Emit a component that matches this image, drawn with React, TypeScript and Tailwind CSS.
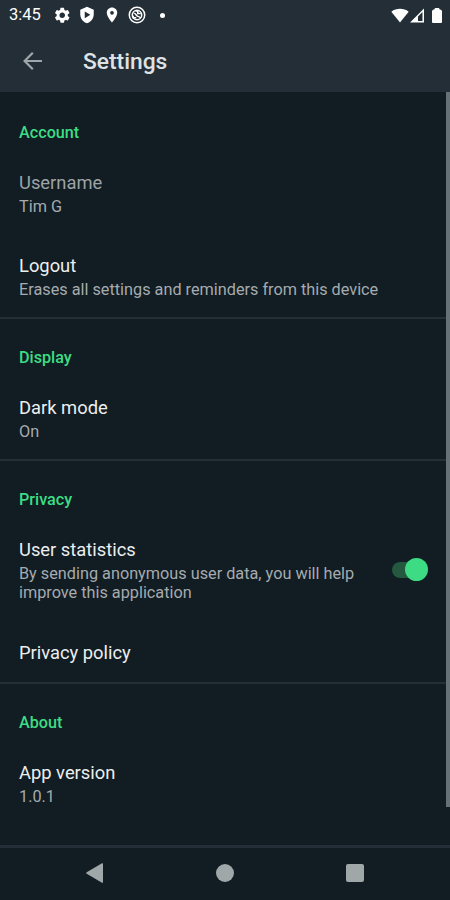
import { useState } from "react";
import type { ReactNode } from "react";

function StatusBar() {
  return (
    <div className="flex h-[30px] items-center justify-between pl-[9px] pr-[8px]">
      <div className="flex items-center text-white">
        <span className="w-[43.5px] text-[16.5px] leading-[20px]">3:45</span>
        <svg className="h-[18.5px] w-[18.5px]" viewBox="0 0 24 24" fill="currentColor">
          <path d="M19.14 12.94c.04-.3.06-.61.06-.94 0-.32-.02-.64-.07-.94l2.03-1.58a.49.49 0 0 0 .12-.61l-1.92-3.32a.488.488 0 0 0-.59-.22l-2.39.96c-.5-.38-1.03-.7-1.62-.94l-.36-2.54a.484.484 0 0 0-.48-.41h-3.84c-.24 0-.43.17-.47.41l-.36 2.54c-.59.24-1.13.57-1.62.94l-2.39-.96c-.22-.08-.47 0-.59.22L2.74 8.87c-.12.21-.08.47.12.61l2.03 1.58c-.05.3-.09.63-.09.94s.02.64.07.94l-2.03 1.58a.49.49 0 0 0-.12.61l1.92 3.32c.12.22.37.29.59.22l2.39-.96c.5.38 1.03.7 1.62.94l.36 2.54c.05.24.24.41.48.41h3.84c.24 0 .44-.17.47-.41l.36-2.54c.59-.24 1.13-.56 1.62-.94l2.39.96c.22.08.47 0 .59-.22l1.92-3.32c.12-.22.07-.47-.12-.61l-2.01-1.58zM12 15.6A3.61 3.61 0 0 1 8.4 12c0-1.98 1.62-3.6 3.6-3.6s3.6 1.62 3.6 3.6-1.62 3.6-3.6 3.6z" />
        </svg>
        <svg className="ml-[7px] h-[18px] w-[18px]" viewBox="0 0 24 24" fill="currentColor" fillRule="evenodd">
          <path d="M12 1 3 5v6c0 5.55 3.84 10.74 9 12 5.16-1.26 9-6.45 9-12V5zM9 7.2v9l7.5-4.5z" />
        </svg>
        <svg className="ml-[7px] h-[18px] w-[18px]" viewBox="0 0 24 24" fill="currentColor">
          <path d="M12 2C8.13 2 5 5.13 5 9c0 5.25 7 13 7 13s7-7.75 7-13c0-3.87-3.13-7-7-7zm0 9.5a2.5 2.5 0 0 1 0-5 2.5 2.5 0 0 1 0 5z" />
        </svg>
        <svg
          className="ml-[7px] h-[18px] w-[18px]"
          viewBox="0 0 24 24"
          fill="none"
          stroke="currentColor"
          strokeWidth="2"
        >
          <circle cx="12" cy="12" r="10.3" />
          <circle cx="12" cy="12" r="6.3" />
          <path d="M7.5 9.5c3 .2 3 3 5 4s3 .8 4.5 2.5M10 6.500h3v3.500h4M7 13v2.500h4" />
        </svg>
        <span className="ml-[14px] h-[5px] w-[5px] rounded-full bg-white" />
      </div>

      <div className="flex items-center text-white">
        <svg className="h-[15px] w-[18px]" viewBox="0 0 18 15" fill="currentColor">
          <path d="M9 14.5 .3 3.7C5.3-.1 12.7-.1 17.7 3.7z" />
        </svg>
        <svg className="ml-[1px] h-[15px] w-[14px]" viewBox="0 0 14 15" fill="currentColor" fillRule="evenodd">
          <path d="M0 14.5 14 .5v14zM8 8.5v4.5h4.5V4z" />
        </svg>
        <svg className="ml-[8px] h-[15px] w-[10px]" viewBox="0 0 10 15" fill="currentColor">
          <path d="M3 0h4l.5 1.2q2.5.3 2.5 2V14a1 1 0 0 1-1 1H1a1 1 0 0 1-1-1V3.2q0-1.7 2.5-2z" />
        </svg>
      </div>
    </div>
  );
}

function Section({ title, children }: { title: string; children: ReactNode }) {
  return (
    <section>
      <h2 className="h-[57px] pl-[19px] pt-[29px] text-[16.2px] font-medium leading-[20px] text-[#3ddc84]">
        {title}
      </h2>
      {children}
    </section>
  );
}

function Row({
  title,
  summary,
  disabled,
  action,
}: {
  title: string;
  summary: string;
  disabled?: boolean;
  action?: ReactNode;
}) {
  return (
    <div className="flex items-center justify-between pb-[18px] pl-[19px] pr-[25px] pt-[19px]">
      <div>
        <p
          className={`text-[18.35px] leading-[25px] ${
            disabled ? "text-[#9da3a7]" : "text-[#eceeef]"
          }`}
        >
          {title}
        </p>
        <p className="mt-[2px] max-w-[365px] whitespace-pre-line text-[16.25px] leading-[19px] text-[#a5abae]">
          {summary}
        </p>
      </div>
      {action}
    </div>
  );
}

function Divider() {
  return <div className="h-[2px] bg-[#232e35]" />;
}

export default function App() {
  const [statistics, setStatistics] = useState(true);

  return (
    <div className="flex h-[900px] w-[450px] flex-col overflow-hidden bg-[#111c23] font-['Roboto',sans-serif]">
      <header className="h-[92px] bg-[#232e36]">
        <StatusBar />
        <div className="flex h-[62px] items-center pl-[23px]">
          <button aria-label="Back" className="text-[#a0a7ab]">
            <svg className="h-[18px] w-[20px]" viewBox="0 0 20 18" fill="none" stroke="currentColor" strokeWidth="2.2">
              <path d="M19 9H2M9.8 .8 1.6 9l8.2 8.2" />
            </svg>
          </button>
          <h1 className="ml-[40px] pt-[2px] text-[22.8px] font-medium leading-[28px] text-[#dfe2e4]">Settings</h1>
        </div>
      </header>

      <div className="flex h-[753px]">
        <main className="w-[450px] shrink-0 pt-[2px]">
          <Section title="Account">
            <Row title="Username" summary="Tim G" disabled />
            <Row title="Logout" summary="Erases all settings and reminders from this device" />
          </Section>
          <Divider />
          <Section title="Display">
            <Row title="Dark mode" summary="On" />
          </Section>
          <Divider />
          <Section title="Privacy">
            <Row
              title="User statistics"
              summary={"By sending anonymous user data, you will help\nimprove this application"}
              action={
                <button
                  role="switch"
                  aria-checked={statistics}
                  aria-label="User statistics"
                  onClick={() => setStatistics(!statistics)}
                  className={`flex h-[16px] w-[33px] items-center rounded-full bg-[#24583f] ${
                    statistics ? "justify-end" : "justify-start"
                  }`}
                >
                  <span className="-mr-[3px] h-[23px] w-[23px] shrink-0 rounded-full bg-[#3ddc84]" />
                </button>
              }
            />
            <p className="h-[62px] pl-[19px] text-[18.35px] leading-[65px] text-[#eceeef]">Privacy policy</p>
          </Section>
          <Divider />
          <Section title="About">
            <Row title="App version" summary="1.0.1" />
          </Section>
        </main>
        {/* scrollbar sits over the right edge of the list */}
        <div className="relative -ml-[4px] h-[715px] w-[4px] shrink-0 bg-[#667077]" />
      </div>

      <nav className="flex h-[55px] items-center justify-between border-t-[3px] border-[#232e36] px-[86px] pb-[2px] text-[#a0a7a9]">
        <svg className="h-[20px] w-[18px]" viewBox="0 0 18 20" fill="currentColor">
          <path d="M.7 9.2 16 .3q1-.5 1 .7v18q0 1.200-1 .7L.7 10.8q-1-.8 0-1.6z" />
        </svg>
        <span className="h-[18px] w-[18px] rounded-full bg-[#a0a7a9]" />
        <span className="h-[18px] w-[18px] rounded-[2px] bg-[#a0a7a9]" />
      </nav>
    </div>
  );
}
